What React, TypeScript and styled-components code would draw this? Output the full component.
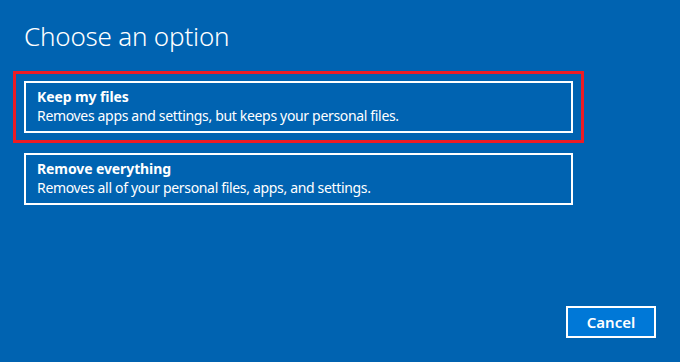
import React from "react";
import styled, { createGlobalStyle } from "styled-components";

const Global = createGlobalStyle`
  html, body { margin: 0; padding: 0; background: #0063b1; }
  body { font-family: "Segoe UI", "Noto Sans", sans-serif; color: #fff; }
`;

const Page = styled.div`
  width: 680px;
  height: 362px;
  box-sizing: border-box;
  padding: 16px 24px 24px 24px;
  display: flex;
  flex-direction: column;
  background: #0063b1;
`;

const Title = styled.h1`
  margin: 0;
  font-family: "Noto Sans", sans-serif;
  font-weight: 300;
  font-size: 26px;
  line-height: 40px;
  letter-spacing: -0.2px;
`;

const Options = styled.div`
  display: flex;
  flex-direction: column;
  margin: 15px 0 0 -11px;
`;

const OptionFrame = styled.div<{ $selected?: boolean }>`
  width: 571px;
  box-sizing: border-box;
  border: 3px solid ${(p) => (p.$selected ? "#ec1c24" : "transparent")};
  padding: 7px 8px;
`;

const OptionBox = styled.button`
  width: 549px;
  height: 52px;
  box-sizing: border-box;
  border: 2px solid #fff;
  background: transparent;
  color: #fff;
  padding: 4px 11px 0 11px;
  text-align: left;
  display: flex;
  flex-direction: column;
  font-family: "Noto Sans", sans-serif;
  cursor: pointer;
`;

const OptionTitle = styled.span`
  font-weight: 700;
  font-size: 14px;
  line-height: 19px;
  letter-spacing: -0.1px;
`;

const OptionText = styled.span`
  font-weight: 400;
  font-size: 14px;
  line-height: 19px;
  letter-spacing: -0.33px;
`;

const Footer = styled.div`
  margin-top: auto;
  display: flex;
  justify-content: flex-end;
`;

const CancelButton = styled.button`
  width: 90px;
  height: 32px;
  box-sizing: border-box;
  border: 2px solid #fff;
  background: #0078d7;
  color: #fff;
  font-family: "Noto Sans", sans-serif;
  font-weight: 600;
  font-size: 15px;
  padding: 0;
  cursor: pointer;
`;

const options = [
  {
    title: "Keep my files",
    text: "Removes apps and settings, but keeps your personal files.",
    selected: true,
  },
  {
    title: "Remove everything",
    text: "Removes all of your personal files, apps, and settings.",
    selected: false,
  },
];

export default function App() {
  return (
    <>
      <Global />
      <Page>
        <Title>Choose an option</Title>
        <Options>
          {options.map((o) => (
            <OptionFrame key={o.title} $selected={o.selected}>
              <OptionBox>
                <OptionTitle>{o.title}</OptionTitle>
                <OptionText>{o.text}</OptionText>
              </OptionBox>
            </OptionFrame>
          ))}
        </Options>
        <Footer>
          <CancelButton>Cancel</CancelButton>
        </Footer>
      </Page>
    </>
  );
}
